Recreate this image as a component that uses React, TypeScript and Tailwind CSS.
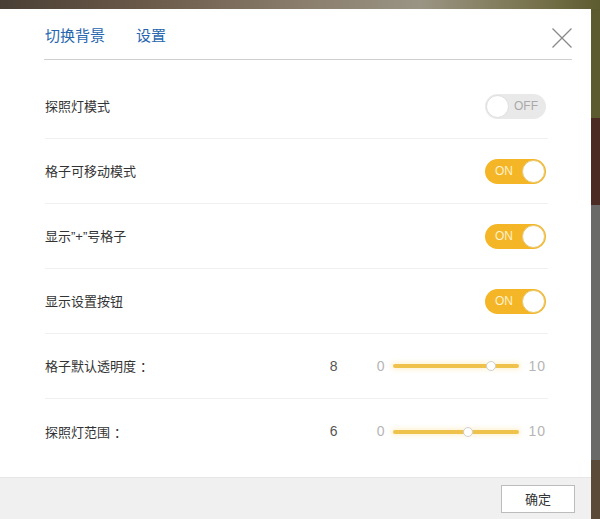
const font = { fontFamily: '"Noto Sans CJK SC", "Liberation Sans", sans-serif' };
const latin = { fontFamily: '"Liberation Sans", sans-serif' };

function Toggle({ on }: { on: boolean }) {
  if (on) {
    return (
      <div className="flex h-[25px] w-[61px] items-center justify-between rounded-full bg-[#f4b626] pl-[10px] pr-[1px]">
        <span className="text-[12px] font-light text-[#fdf1cc]" style={latin}>
          ON
        </span>
        <span className="h-[23px] w-[23px] rounded-full border border-[#e8c770] bg-white" />
      </div>
    );
  }
  return (
    <div className="flex h-[25px] w-[61px] items-center justify-between rounded-full bg-[#e9e9e9] pl-[1px] pr-[8px]">
      <span className="h-[23px] w-[23px] rounded-full border border-[#dedede] bg-white" />
      <span className="text-[12px] font-light text-[#a9a9a9]" style={latin}>
        OFF
      </span>
    </div>
  );
}

function Slider({ value }: { value: number }) {
  const pct = value / 10;
  return (
    <div className="flex items-center" style={latin}>
      <span className="w-[20px] text-center text-[14px] text-[#555]">{value}</span>
      <span className="ml-[33px] text-[14px] text-[#b5b5b5]">0</span>
      <div className="relative ml-[9px] h-[12px] w-[126px]">
        <div className="absolute left-0 right-0 top-[4px] h-[4px] rounded-full bg-[#efc24c] shadow-[0_0_4px_2px_rgba(250,220,140,0.35)]" />
        <div
          className="absolute top-[1px] h-[10px] w-[10px] rounded-full border border-[#cfcfcf] bg-white"
          style={{ left: `${pct * 116}px` }}
        />
      </div>
      <span className="ml-[9px] text-[14px] tracking-[1px] text-[#b5b5b5]">10</span>
    </div>
  );
}

function Colon() {
  return <span className="inline-block pl-[4px]">：</span>;
}

const rows: { label: React.ReactNode; key: string; toggle?: boolean; slider?: number }[] = [
  { key: "a", label: "探照灯模式", toggle: false },
  { key: "b", label: "格子可移动模式", toggle: true },
  {
    key: "c",
    label: (
      <>
        显示<span style={latin}>”+”</span>号格子
      </>
    ),
    toggle: true,
  },
  { key: "d", label: "显示设置按钮", toggle: true },
  {
    key: "e",
    label: (
      <>
        格子默认透明度
        <Colon />
      </>
    ),
    slider: 8,
  },
  {
    key: "f",
    label: (
      <>
        探照灯范围
        <Colon />
      </>
    ),
    slider: 6,
  },
];

export default function App() {
  return (
    <div className="flex h-[519px] w-[600px] flex-col overflow-hidden" style={font}>
      <div className="h-[9px] bg-[linear-gradient(90deg,#4a3f35_0%,#6b5a49_25%,#8a7d6c_50%,#9a9484_70%,#7a7550_88%,#5d5b30_100%)]" />
      <div className="flex flex-1">
        <div className="flex w-[591px] flex-col bg-white">
          <div className="flex h-[50px] items-center justify-between pl-[45px] pr-[19px]">
            <div className="flex items-center gap-[31px] pt-[2px] text-[15px] text-[#2766ae]">
              <span>切换背景</span>
              <span>设置</span>
            </div>
            <svg width="20" height="20" viewBox="0 0 20 20" className="mt-[8px]" fill="none" stroke="#8a8a8a" strokeWidth="1.3">
              <path d="M0.5 0.5 L19.5 19.5 M19.5 0.5 L0.5 19.5" />
            </svg>
          </div>
          <div className="ml-[44px] mr-[19px] h-px bg-[#cfcfcf]" />
          <div className="ml-[45px] mr-[43px] mt-[14px] flex flex-col">
            {rows.map((r, i) => (
              <div
                key={r.key}
                className={
                  "flex h-[65px] items-center justify-between pr-[2px] " +
                  (i < rows.length - 1 ? "border-b border-[#f0f0f0]" : "")
                }
              >
                <span className="text-[13px] text-[#333]">{r.label}</span>
                {r.slider !== undefined ? <Slider value={r.slider} /> : <Toggle on={!!r.toggle} />}
              </div>
            ))}
          </div>
          <div className="mt-auto flex h-[42px] items-center justify-end border-t border-[#e6e6e6] bg-[#f0f0f0] pr-[16px]">
            <button
              type="button"
              className="h-[28px] w-[74px] border border-[#bcbcbc] bg-white text-[13px] text-[#333]"
            >
              确定
            </button>
          </div>
        </div>
        <div className="flex w-[9px] flex-col">
          <div className="h-[109px] bg-[#5c5b2f]" />
          <div className="h-[87px] bg-[#4b2b24]" />
          <div className="h-[255px] bg-[#6a6a68]" />
          <div className="flex-1 bg-[#5c4a38]" />
        </div>
      </div>
    </div>
  );
}
